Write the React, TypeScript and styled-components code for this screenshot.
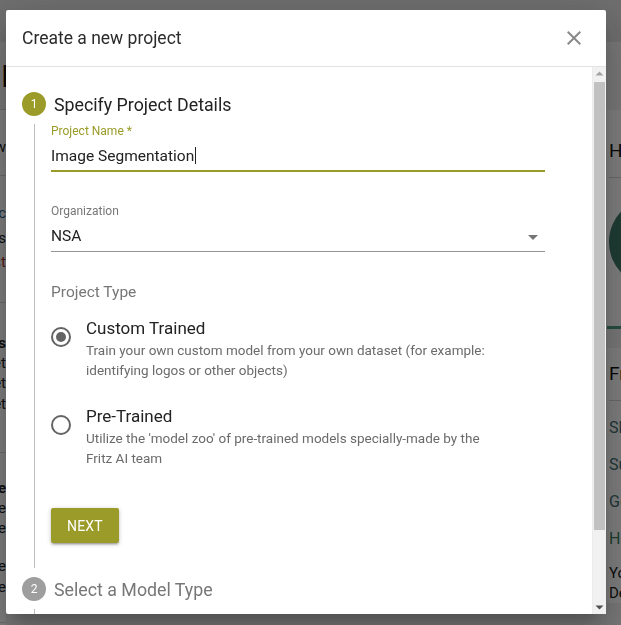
import React from "react";
import styled, { createGlobalStyle } from "styled-components";

const olive = "#9b9b29";

const GlobalStyle = createGlobalStyle`
  html, body {
    margin: 0;
    padding: 0;
  }
  body {
    font-family: Roboto, "Liberation Sans", sans-serif;
    background: #f2f2f2;
    overflow: hidden;
  }
  * {
    box-sizing: border-box;
  }
`;

/* ---------- page behind the dialog ---------- */

const Page = styled.div`
  height: 100vh;
  display: flex;
  flex-direction: column;
  background: #f2f2f2;
  color: #111;
`;

const TopBar = styled.header`
  height: 42px;
  flex-shrink: 0;
  background: #dedede;
`;

const PageMain = styled.main`
  flex: 1;
  display: flex;
  justify-content: space-between;
  overflow: hidden;
`;

const LeftPane = styled.section`
  width: 6px;
  display: flex;
  flex-direction: column;
  background: #fff;
`;

const PageHeading = styled.h1`
  margin: 0;
  height: 68px;
  padding-left: 1px;
  display: flex;
  align-items: center;
  font-size: 32px;
  font-weight: 400;
  white-space: nowrap;
  background: #f2f2f2;
  border-bottom: 1px solid #d6d6d6;
`;

const LeftBlock = styled.div<{ $h: number; $top: number }>`
  height: ${(p) => p.$h}px;
  display: flex;
  flex-direction: column;
  align-items: flex-end;
  padding-top: ${(p) => p.$top}px;
  border-bottom: 1px solid #d6d6d6;
  font-size: 15px;
  white-space: nowrap;
`;

const LeftLine = styled.span<{ $bold?: boolean; $color?: string; $lh?: number }>`
  line-height: ${(p) => p.$lh || 20}px;
  font-weight: ${(p) => (p.$bold ? 700 : 400)};
  color: ${(p) => p.$color || "#222"};
`;

const RightPane = styled.aside`
  width: 14px;
  display: flex;
  flex-direction: column;
  padding-top: 68px;
  white-space: nowrap;
`;

const SideCard = styled.div<{ $accent?: boolean }>`
  background: #fff;
  padding-left: 2px;
  border-bottom: ${(p) => (p.$accent ? "3px solid #4f9c86" : "none")};
  margin-bottom: 19px;
`;

const SideTitle = styled.div<{ $h: number }>`
  height: ${(p) => p.$h}px;
  display: flex;
  align-items: flex-end;
  padding-bottom: 15px;
  line-height: 22px;
  border-bottom: 1px solid #d6d6d6;
  font-size: 19px;
`;

const Avatar = styled.div`
  width: 90px;
  height: 90px;
  margin: 19px 0 39px;
  border-radius: 50%;
  background: #3f7a6b;
`;

const SideList = styled.ul`
  margin: 0;
  padding: 8px 0 0;
  list-style: none;
  font-size: 16px;
`;

const SideItem = styled.li<{ $color?: string }>`
  height: 37px;
  display: flex;
  align-items: center;
  color: ${(p) => p.$color || "#3f6f73"};
`;

const SideNote = styled.li`
  font-size: 15px;
  line-height: 20px;
  padding-top: 6px;
  color: #222;
`;

const Backdrop = styled.div`
  position: fixed;
  inset: 0;
  background: rgba(0, 0, 0, 0.5);
`;

/* ---------- dialog ---------- */

const Dialog = styled.div`
  position: fixed;
  top: 10px;
  left: 6px;
  width: 600px;
  height: 604px;
  display: flex;
  flex-direction: column;
  background: #fff;
  border-radius: 2px;
  box-shadow: 0 11px 15px -7px rgba(0, 0, 0, 0.2),
    0 24px 38px 3px rgba(0, 0, 0, 0.14), 0 9px 46px 8px rgba(0, 0, 0, 0.12);
`;

const DialogHeader = styled.div`
  height: 57px;
  flex-shrink: 0;
  display: flex;
  align-items: center;
  justify-content: space-between;
  padding: 0 20px 0 16px;
  border-bottom: 1px solid #e2e2e2;
`;

const DialogTitle = styled.h2`
  margin: 0;
  font-size: 17.5px;
  font-weight: 400;
  color: #2b2b2b;
`;

const CloseButton = styled.button`
  width: 24px;
  height: 24px;
  padding: 0;
  border: 0;
  background: none;
  display: flex;
  align-items: center;
  justify-content: center;
  cursor: pointer;
  svg {
    width: 24px;
    height: 24px;
    fill: #8a8a8a;
  }
`;

const DialogBody = styled.div`
  flex: 1;
  min-height: 0;
  display: flex;
`;

const ScrollArea = styled.div`
  flex: 1;
  overflow: hidden;
  padding: 25px 0 0 16px;
`;

const ScrollBar = styled.div`
  width: 14px;
  flex-shrink: 0;
  display: flex;
  flex-direction: column;
  background: #f1f1f1;
  border-left: 1px solid #ececec;
`;

const ScrollArrow = styled.svg<{ $dim?: boolean }>`
  width: 13px;
  height: 14px;
  flex-shrink: 0;
  fill: ${(p) => (p.$dim ? "#a3a3a3" : "#505050")};
`;

const ScrollThumb = styled.div`
  height: 448px;
  margin: 1px 1px 0 1px;
  background: #c1c1c1;
`;

const ScrollSpacer = styled.div`
  flex: 1;
`;

const StepHeader = styled.div`
  height: 24px;
  display: flex;
  align-items: center;
  gap: 8px;
`;

const StepIcon = styled.span<{ $active?: boolean }>`
  width: 24px;
  height: 24px;
  border-radius: 50%;
  display: flex;
  align-items: center;
  justify-content: center;
  background: ${(p) => (p.$active ? olive : "#9e9e9e")};
  color: #fff;
  font-size: 12px;
`;

const StepTitle = styled.span<{ $active?: boolean }>`
  font-size: 17.8px;
  color: ${(p) => (p.$active ? "#222" : "#777")};
`;

const StepContent = styled.div`
  margin: 8px 0 9px 12px;
  padding: 0 0 25px 16px;
  border-left: 1px solid #bdbdbd;
`;

const StepTail = styled.div`
  height: 84px;
  margin: 8px 0 0 12px;
  border-left: 1px solid #bdbdbd;
`;

const Field = styled.div<{ $gap?: number }>`
  width: 494px;
  margin-top: ${(p) => p.$gap || 0}px;
`;

const FieldLabel = styled.label<{ $focused?: boolean }>`
  display: block;
  font-size: 12px;
  line-height: 14px;
  color: ${(p) => (p.$focused ? olive : "#777")};
`;

const InputRow = styled.div<{ $focused?: boolean }>`
  display: flex;
  align-items: center;
  justify-content: space-between;
  padding: 9px 0 ${(p) => (p.$focused ? 4 : 5)}px;
  font-size: 15.5px;
  line-height: 19px;
  color: #222;
  border-bottom: ${(p) => (p.$focused ? `2px solid ${olive}` : "1px solid #949494")};
`;

const Caret = styled.span`
  display: inline-block;
  width: 1px;
  height: 17px;
  margin-left: 1px;
  vertical-align: -3px;
  background: #222;
`;

const DropArrow = styled.svg`
  width: 24px;
  height: 24px;
  margin: -3px 0;
  fill: #757575;
`;

const SectionLabel = styled.div`
  margin-top: 31px;
  font-size: 15.5px;
  line-height: 19px;
  color: #777;
`;

const RadioOption = styled.div<{ $gap: number }>`
  display: flex;
  margin-top: ${(p) => p.$gap}px;
`;

const RadioMark = styled.span<{ $checked?: boolean }>`
  width: 20px;
  height: 20px;
  margin: 9px 15px 0 0;
  flex-shrink: 0;
  border-radius: 50%;
  border: 2px solid #646464;
  display: flex;
  align-items: center;
  justify-content: center;
  &::after {
    content: "";
    width: 10px;
    height: 10px;
    border-radius: 50%;
    background: #646464;
    display: ${(p) => (p.$checked ? "block" : "none")};
  }
`;

const OptionText = styled.div`
  display: flex;
  flex-direction: column;
  gap: 2px;
`;

const OptionTitle = styled.span`
  font-size: 17px;
  line-height: 20px;
  color: #222;
`;

const OptionDesc = styled.span`
  font-size: 13.5px;
  line-height: 20px;
  color: #6b6b6b;
  max-width: 412px;
`;

const NextButton = styled.button`
  margin-top: 40px;
  height: 35px;
  min-width: 64px;
  padding: 0 16px;
  border: 0;
  border-radius: 2px;
  background: ${olive};
  color: #fff;
  font-family: inherit;
  font-size: 14px;
  letter-spacing: 0.2px;
  box-shadow: 0 1px 5px rgba(0, 0, 0, 0.2), 0 2px 2px rgba(0, 0, 0, 0.14),
    0 3px 1px -2px rgba(0, 0, 0, 0.12);
  cursor: pointer;
`;

export default function App() {
  return (
    <>
      <GlobalStyle />
      <Page>
        <TopBar />
        <PageMain>
          <LeftPane>
            <PageHeading>Edit</PageHeading>
            <LeftBlock $h={66} $top={27}>
              <LeftLine>Overview</LeftLine>
            </LeftBlock>
            <LeftBlock $h={127} $top={27}>
              <LeftLine $color="#2f5f8a" $lh={20}>Project - c</LeftLine>
              <LeftLine $lh={30}>Features</LeftLine>
              <LeftLine $color="#a33" $lh={18}>Last</LeftLine>
            </LeftBlock>
            <LeftBlock $h={150} $top={30}>
              <LeftLine $bold>Details</LeftLine>
              <LeftLine>Dataset</LeftLine>
              <LeftLine>Target</LeftLine>
              <LeftLine $lh={22}>Budget</LeftLine>
            </LeftBlock>
            <LeftBlock $h={170} $top={25}>
              <LeftLine $bold>Release</LeftLine>
              <LeftLine>Time</LeftLine>
              <LeftLine>Runtime</LeftLine>
              <LeftLine $lh={18}>&nbsp;</LeftLine>
              <LeftLine>Time</LeftLine>
              <LeftLine $lh={22}>Runtime</LeftLine>
            </LeftBlock>
          </LeftPane>
          <RightPane>
            <SideCard $accent>
              <SideTitle $h={68}>Hello</SideTitle>
              <Avatar />
            </SideCard>
            <SideCard>
              <SideTitle $h={53}>Fritz</SideTitle>
              <SideList>
                <SideItem>SDKs</SideItem>
                <SideItem>Support</SideItem>
                <SideItem>Getting Started</SideItem>
                <SideItem $color="#3d7f5f">Help</SideItem>
                <SideNote>
                  Your
                  <br />
                  Developer
                </SideNote>
              </SideList>
            </SideCard>
          </RightPane>
        </PageMain>
      </Page>
      <Backdrop />
      <Dialog>
        <DialogHeader>
          <DialogTitle>Create a new project</DialogTitle>
          <CloseButton aria-label="Close">
            <svg viewBox="0 0 24 24">
              <path d="M19 6.41L17.59 5 12 10.59 6.41 5 5 6.41 10.59 12 5 17.59 6.41 19 12 13.41 17.59 19 19 17.59 13.41 12z" />
            </svg>
          </CloseButton>
        </DialogHeader>
        <DialogBody>
          <ScrollArea>
            <StepHeader>
              <StepIcon $active>1</StepIcon>
              <StepTitle $active>Specify Project Details</StepTitle>
            </StepHeader>
            <StepContent>
              <Field>
                <FieldLabel $focused>Project Name *</FieldLabel>
                <InputRow $focused>
                  <span>
                    Image Segmentation
                    <Caret />
                  </span>
                </InputRow>
              </Field>
              <Field $gap={32}>
                <FieldLabel>Organization</FieldLabel>
                <InputRow>
                  <span>NSA</span>
                  <DropArrow viewBox="0 0 24 24">
                    <path d="M7 10l5 5 5-5z" />
                  </DropArrow>
                </InputRow>
              </Field>
              <SectionLabel>Project Type</SectionLabel>
              <RadioOption $gap={16}>
                <RadioMark $checked />
                <OptionText>
                  <OptionTitle>Custom Trained</OptionTitle>
                  <OptionDesc>
                    Train your own custom model from your own dataset (for example:
                    identifying logos or other objects)
                  </OptionDesc>
                </OptionText>
              </RadioOption>
              <RadioOption $gap={26}>
                <RadioMark />
                <OptionText>
                  <OptionTitle>Pre-Trained</OptionTitle>
                  <OptionDesc>
                    Utilize the 'model zoo' of pre-trained models specially-made by the
                    Fritz AI team
                  </OptionDesc>
                </OptionText>
              </RadioOption>
              <NextButton>NEXT</NextButton>
            </StepContent>
            <StepHeader>
              <StepIcon>2</StepIcon>
              <StepTitle>Select a Model Type</StepTitle>
            </StepHeader>
            <StepTail />
          </ScrollArea>
          <ScrollBar>
            <ScrollArrow $dim viewBox="0 0 13 14">
              <path d="M2.5 8.5 L6.5 4.5 L10.5 8.5z" />
            </ScrollArrow>
            <ScrollThumb />
            <ScrollSpacer />
            <ScrollArrow viewBox="0 0 13 14">
              <path d="M2.5 5.5 L6.5 9.5 L10.5 5.5z" />
            </ScrollArrow>
          </ScrollBar>
        </DialogBody>
      </Dialog>
    </>
  );
}
